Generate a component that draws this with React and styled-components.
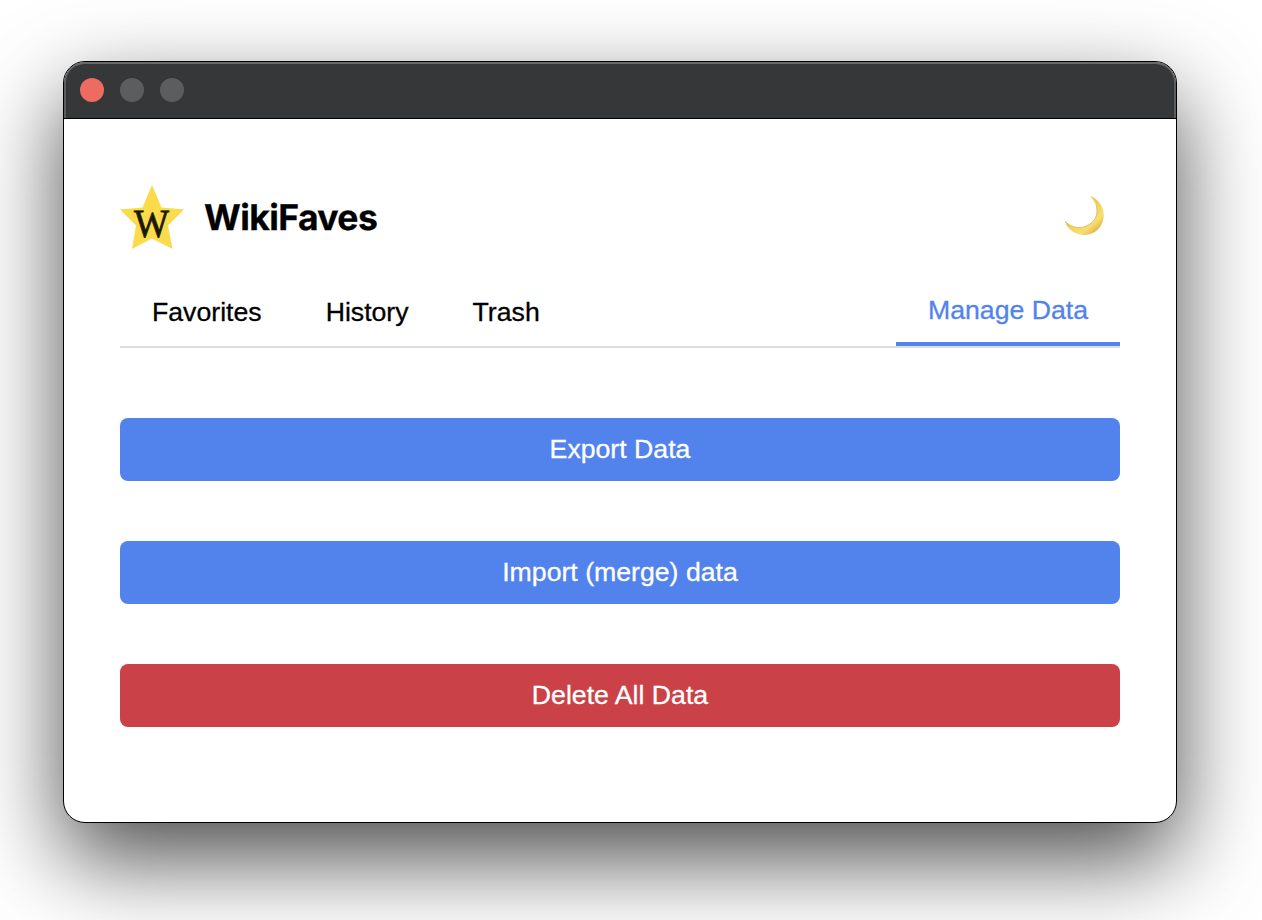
import React from "react";
import styled, { createGlobalStyle } from "styled-components";

const GlobalStyle = createGlobalStyle`
  * { box-sizing: border-box; }
  html, body { margin: 0; background: #fff; }
  body { overflow: hidden; text-rendering: geometricPrecision; }
`;

const Desktop = styled.main`
  height: 920px;
  padding: 61px 0 0 63px;
  overflow: hidden;
`;

const Window = styled.section`
  display: flex;
  flex-direction: column;
  width: 1114px;
  height: 762px;
  border: 1px solid #000;
  border-radius: 22px;
  overflow: hidden;
  background: #fff;
  box-shadow: 0 36px 90px rgba(0, 0, 0, 0.7);
`;

const TitleBar = styled.header`
  display: flex;
  align-items: center;
  gap: 16px;
  height: 57px;
  flex: none;
  padding: 0 16px;
  border-bottom: 1px solid #000;
  border-radius: 21px 21px 0 0;
  background: #363738;
  box-shadow: inset 0 2px 0 #686969, inset 2px 0 0 #5c5d5d, inset -2px 0 0 #5c5d5d;
`;

const Light = styled.span`
  width: 24px;
  height: 24px;
  border-radius: 50%;
  background: ${(p) => p.$color};
`;

const Page = styled.div`
  flex: 1;
  padding: 66px 56px 0;
  font-family: "Liberation Sans", Arial, sans-serif;
  font-size: 26.667px;
  -webkit-text-stroke: 0.3px currentColor;
`;

const Brand = styled.div`
  display: flex;
  align-items: center;
  height: 64px;
`;

const Title = styled.h1`
  margin: 0 auto 0 20px;
  padding-top: 2px;
  font-family: Inter, sans-serif;
  font-size: 35.5px;
  font-weight: 700;
  line-height: 64px;
  letter-spacing: -0.6px;
`;

const ThemeButton = styled.button`
  display: flex;
  margin-right: 14px;
  padding: 0 0 2px;
  border: 0;
  background: none;
`;

const Tabs = styled.nav`
  display: flex;
  height: 71px;
  margin-top: 28px;
  border-bottom: 2px solid #ddd;
`;

const Tab = styled.button`
  display: flex;
  align-items: center;
  justify-content: center;
  margin-left: ${(p) => (p.$active ? "auto" : "0")};
  padding: 2px 32px 0;
  border: 0;
  border-bottom: ${(p) => (p.$active ? "4px solid #5283ec" : "0")};
  background: none;
  color: ${(p) => (p.$active ? "#5283ec" : "#000")};
  font: inherit;
  white-space: nowrap;
`;

const Actions = styled.div`
  display: flex;
  flex-direction: column;
  gap: 60px;
  margin-top: 70px;
`;

const Action = styled.button`
  height: 63px;
  padding: 0;
  border: 0;
  border-radius: 8px;
  background: ${(p) => (p.$danger ? "#ca4248" : "#5283ec")};
  color: #fff;
  font: inherit;
`;

const LogoLetter = styled.text`
  font-family: "Liberation Serif", serif;
  font-size: 40px;
  fill: #1a1808;
  stroke: #1a1808;
  stroke-width: 0.8px;
`;

const StarLogo = () => (
  <svg width="64" height="64" viewBox="0 0 64 64">
    <path d="M32 0 41.500 22.500 64 24.500 48 40.500 52.500 64 32 53.500 12 64 16 40.500 0 24.500 22.500 22.500Z" fill="#fadb4b" />
    <LogoLetter x="31.500" y="52" textAnchor="middle" textLength="35" lengthAdjust="spacingAndGlyphs">
      W
    </LogoLetter>
  </svg>
);

const Moon = () => (
  <svg width="42" height="42" viewBox="0 0 42 42">
    <defs>
      <linearGradient id="moon" x1="0.2" y1="0.3" x2="0.8" y2="1">
        <stop offset="0" stopColor="#e3b33b" />
        <stop offset="0.45" stopColor="#f5d65c" />
        <stop offset="0.7" stopColor="#f8df73" />
        <stop offset="1" stopColor="#d9a93d" />
      </linearGradient>
    </defs>
    <path
      d="M26 1C34 4 40 11.500 39.800 20.500C39.500 31.500 31 40 20.500 40C11.500 40 3.500 34.500 1 26.500C6.500 32 15 34.500 22.500 31C31.500 27 35 18.500 32 10C31 7 29 4 26 1Z"
      fill="url(#moon)"
    />
    <path d="M1 26.500C6.500 32 15 34.500 22.500 31C31.500 27 35 18.500 32 10" fill="none" stroke="#d5b35a" strokeWidth="0.8" />
  </svg>
);

export default function App() {
  return (
    <Desktop>
      <GlobalStyle />
      <Window>
        <TitleBar>
          <Light $color="#ed6b60" />
          <Light $color="#5c5d5e" />
          <Light $color="#5c5d5e" />
        </TitleBar>
        <Page>
          <Brand>
            <StarLogo />
            <Title>WikiFaves</Title>
            <ThemeButton aria-label="Toggle theme">
              <Moon />
            </ThemeButton>
          </Brand>
          <Tabs>
            <Tab>Favorites</Tab>
            <Tab>History</Tab>
            <Tab>Trash</Tab>
            <Tab $active>Manage Data</Tab>
          </Tabs>
          <Actions>
            <Action>Export Data</Action>
            <Action>Import (merge) data</Action>
            <Action $danger>Delete All Data</Action>
          </Actions>
        </Page>
      </Window>
    </Desktop>
  );
}
